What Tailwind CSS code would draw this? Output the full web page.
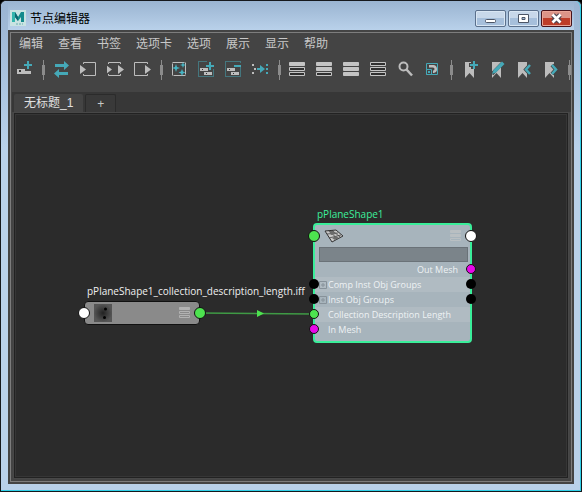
<!DOCTYPE html>
<html lang="zh-CN">
<head>
  <meta charset="UTF-8" />
  <meta name="viewport" content="width=device-width, initial-scale=1" />
  <title>节点编辑器</title>
  <script src="https://cdn.jsdelivr.net/npm/@tailwindcss/browser@4"></script>
</head>
<body class="h-screen bg-black font-['Liberation_Sans','Noto_Sans_CJK_SC',sans-serif] text-xs">

  <!-- Shared symbols -->
  <svg class="hidden">
    <symbol id="plus" viewBox="0 0 8 8"><path d="M3 0h2v3h3v2H5v3H3V5H0V3h3z" /></symbol>
    <symbol id="bookmark" viewBox="0 0 9 16"><path d="M0 0h9v16L4.500 11 0 16z" /></symbol>
    <symbol id="expand" viewBox="0 0 8 8"><path d="M.5.5h7v7h-7zM2 4h4M4 2v4" fill="none" stroke="#87929a" /></symbol>
  </svg>

  <div class="flex h-full flex-col rounded-t-md border border-[#15181c] bg-[#b9d1ea]">
    <div class="flex min-h-0 flex-1 flex-col rounded-t-md border-r border-b border-[#2fd0e8] bg-linear-to-b from-[#9ab4d2] to-[#b9d1ea] to-30% pr-1.5 pb-1.5 pl-[7px]">

      <!-- Title bar -->
      <header class="flex h-[29px] shrink-0 items-center bg-linear-to-b from-[#9ab4d1] to-[#b9d1ea] pt-1 pl-0.5">
        <svg class="size-4" viewBox="0 0 16 16">
          <rect width="16" height="16" fill="#c9e3e2" />
          <path d="M2 12V2h3l3 5 3-5h3v10h-3V7l-3 4-3-4v5z" fill="#148a8c" />
          <path d="M2 2h3v10H2z" fill="#33b5ad" />
          <path d="M5 2l3 5v4L5 7z" fill="#0c6770" />
          <path d="M6 14h7" stroke="#69aeb0" stroke-dasharray="2 1" />
        </svg>
        <h1 class="ml-1 flex-1 pt-0.5 text-black">节点编辑器</h1>
        <div class="mr-0.5 flex gap-0.5 pt-0.5">
          <button aria-label="最小化" class="h-[17px] w-[31px] rounded-xs border border-[#5b708c] bg-linear-to-b from-[#c8d8ea] from-50% to-[#a6bfdb] to-50% shadow-[inset_0_0_0_1px_#d9e6f3]">
            <svg class="mx-auto h-[15px] w-[15px]" viewBox="0 0 15 15"><rect x="2.500" y="8.500" width="10" height="3" rx="1" fill="#fff" stroke="#4c5566" /></svg>
          </button>
          <button aria-label="最大化" class="h-[17px] w-[31px] rounded-xs border border-[#5b708c] bg-linear-to-b from-[#c8d8ea] from-50% to-[#a6bfdb] to-50% shadow-[inset_0_0_0_1px_#d9e6f3]">
            <svg class="mx-auto h-[15px] w-[15px]" viewBox="0 0 15 15"><path d="M2.500 3.500h10v8h-10zM6 6.500h3v2H6z" fill="#fff" fill-rule="evenodd" stroke="#4c5566" /></svg>
          </button>
          <button aria-label="关闭" class="h-[17px] w-[31px] rounded-xs border border-[#47131b] bg-linear-to-b from-[#dc9488] from-50% to-[#bd3d29] to-50% shadow-[inset_0_0_0_1px_#e9a597]">
            <svg class="mx-auto h-[15px] w-[15px]" viewBox="0 0 15 15"><path d="M4 4l7 7M11 4l-7 7" stroke="#4c4552" stroke-width="5" /><path d="M3.500 3.500l8 8M11.500 3.500l-8 8" stroke="#fff" stroke-width="2.600" /></svg>
          </button>
        </div>
      </header>

      <div class="flex min-h-0 flex-1 flex-col bg-[#444] p-0.5">
        <main class="flex min-h-0 flex-1 flex-col overflow-hidden border border-[#7d7d7d]">

          <!-- Menus -->
          <nav class="flex h-[22px] shrink-0 items-center gap-[15px] pl-2 text-[#c8c8c8]">
            <button>编辑</button>
            <button>查看</button>
            <button>书签</button>
            <button>选项卡</button>
            <button>选项</button>
            <button>展示</button>
            <button>显示</button>
            <button>帮助</button>
          </nav>

          <!-- Toolbar -->
          <div class="flex h-[37px] shrink-0 overflow-hidden pb-2 *:flex *:shrink-0 *:items-center *:justify-center [&_svg]:h-[17px] [&_svg]:w-[17px] [&>button]:w-[27px] [&>span]:w-2.5">
            <button aria-label="创建节点"><svg viewBox="0 0 17 17"><path d="M1 8h8v2h6v3H1z" fill="#bdbdbd" /><path d="M3 9h2v2H3z" fill="#333" /><use href="#plus" x="8" y="0" width="8" height="8" fill="#45a9b8" /></svg></button>
            <span><i class="flex h-5 w-[3px] items-center bg-[linear-gradient(#8c8c8c,#8c8c8c)] bg-[length:1px_100%] bg-center bg-no-repeat"><b class="h-2.5 w-full bg-[#8c8c8c]"></b></i></span>
            <button aria-label="同步选择"><svg viewBox="0 0 17 17" fill="#45a9b8"><path d="M2 3h9V0l5 4.500L11 9V6H2zM15 11H6V8l-5 4.500L6 17v-3h9z" /></svg></button>
            <button aria-label="输入连接"><svg viewBox="0 0 17 17"><path d="M3.500 3V1.500h12v13h-12V13" fill="none" stroke="#bdbdbd" /><path d="M0 4l6 4.500L0 13z" fill="#bdbdbd" /></svg></button>
            <button aria-label="输入和输出连接"><svg viewBox="0 0 17 17"><path d="M1.500 3V1.500h12V3M1.500 13v1.500h12V13" fill="none" stroke="#bdbdbd" /><path d="M-1 4l6 4.500L-1 13zM11 4l6 4.500L11 13z" fill="#bdbdbd" /></svg></button>
            <button aria-label="输出连接"><svg viewBox="0 0 17 17"><path d="M13.500 3V1.500H.5v13h13V13" fill="none" stroke="#bdbdbd" /><path d="M11 4l6 4.500L11 13z" fill="#bdbdbd" /></svg></button>
            <span><i class="flex h-5 w-[3px] items-center bg-[linear-gradient(#8c8c8c,#8c8c8c)] bg-[length:1px_100%] bg-center bg-no-repeat"><b class="h-2.5 w-full bg-[#8c8c8c]"></b></i></span>
            <button aria-label="清除图表"><svg viewBox="0 0 17 17"><path d="M1.500 1.500h13v13h-13z" fill="none" stroke="#bdbdbd" stroke-dasharray="12 1" /><path d="M5 3l1 3 3 1-3 1-1 3-1-3-3-1 3-1zM12 1l.8 2.200L15 4l-2.200.8L12 7l-.8-2.200L9 4l2.200-.8zM11 8l1 2.500 2.500 1-2.500 1L11 15l-1-2.500-2.500-1 2.500-1z" fill="#45b5c4" /></svg></button>
            <button aria-label="添加到图表"><svg viewBox="0 0 17 17"><path d="M.5.5h15v15H.5z" fill="none" stroke="#45a9b8" stroke-dasharray="1 1" /><path d="M9 0h8v8H9z" fill="#444" /><path d="M2 7h8v3H2zM6 11h8v3H6z" fill="#bdbdbd" /><path d="M4 8h1v1H4zM8 12h1v1H8z" fill="#333" /><use href="#plus" x="8" y="1" width="8" height="8" fill="#45a9b8" /></svg></button>
            <button aria-label="从图表中移除"><svg viewBox="0 0 17 17"><path d="M.5.5h15v15H.5z" fill="none" stroke="#45a9b8" stroke-dasharray="1 1" /><path d="M9 2h8v4H9z" fill="#444" /><path d="M2 7h8v3H2zM6 11h8v3H6z" fill="#bdbdbd" /><path d="M4 8h1v1H4zM8 12h1v1H8z" fill="#333" /><path d="M9 4h7v2H9z" fill="#45a9b8" /></svg></button>
            <button aria-label="重新排布"><svg viewBox="0 0 17 17"><path d="M0 3h2v2H0zM2 7h2v2H2zM0 11h2v2H0z" fill="#bdbdbd" /><path d="M14 3h2v2h-2zM14 7h2v2h-2zM14 11h2v2h-2zM5 7h3V4l5 4-5 4V9H5z" fill="#45a9b8" /></svg></button>
            <span><i class="flex h-5 w-[3px] items-center bg-[linear-gradient(#8c8c8c,#8c8c8c)] bg-[length:1px_100%] bg-center bg-no-repeat"><b class="h-2.5 w-full bg-[#8c8c8c]"></b></i></span>
            <button aria-label="简单模式"><svg viewBox="0 0 17 17" fill="#303030" stroke="#c4c4c4"><path d="M.5 1.500h15v3H.5z" fill="#c4c4c4" /><path d="M.5 6.500h15v3H.5zM.5 11.500h15v3H.5z" /></svg></button>
            <button aria-label="已连接模式"><svg viewBox="0 0 17 17" fill="#303030" stroke="#c4c4c4"><path d="M.5 1.500h15v3H.5zM.5 6.500h15v3H.5z" fill="#c4c4c4" /><path d="M.5 11.500h15v3H.5z" /></svg></button>
            <button aria-label="完全模式"><svg viewBox="0 0 17 17" fill="#c4c4c4" stroke="#c4c4c4"><path d="M.5 1.500h15v3H.5zM.5 6.500h15v3H.5zM.5 11.500h15v3H.5z" /></svg></button>
            <button aria-label="自定义模式"><svg viewBox="0 0 17 17" fill="#303030" stroke="#c4c4c4"><path d="M.5 1.500h15v3H.5zM.5 6.500h15v3H.5zM.5 11.500h15v3H.5z" /></svg></button>
            <button aria-label="搜索"><svg viewBox="0 0 17 17" fill="none" stroke="#bdbdbd" stroke-width="2"><circle cx="6.500" cy="5.500" r="4" /><path d="M9.500 8.500l5.500 6" stroke-width="2.500" /></svg></button>
            <button aria-label="样例"><svg viewBox="0 0 17 17"><path d="M2.500 2.500h11v11h-11z" fill="none" stroke="#45a9b8" /><path d="M5 4h3.500a4 4 0 0 1 1 8H9V9.500a1.500 1.500 0 0 0 0-3H5z" fill="#bdbdbd" /><path d="M2.500 8.500h5v5h-5z" fill="#444" stroke="#45a9b8" /><path d="M4 10h2v2H4z" fill="#45a9b8" /></svg></button>
            <span><i class="flex h-5 w-[3px] items-center bg-[linear-gradient(#8c8c8c,#8c8c8c)] bg-[length:1px_100%] bg-center bg-no-repeat"><b class="h-2.5 w-full bg-[#8c8c8c]"></b></i></span>
            <button aria-label="创建书签"><svg viewBox="0 0 17 17"><use href="#bookmark" x="4" y="1" width="9" height="16" fill="#bdbdbd" /><path d="M10 0h4v2h3v6h-7V6H8V2h2z" fill="#444" /><use href="#plus" x="9" y="0" width="8" height="8" fill="#45a9b8" /></svg></button>
            <button aria-label="编辑书签"><svg viewBox="0 0 17 17"><use href="#bookmark" x="4" y="1" width="9" height="16" fill="#bdbdbd" /><path d="M4 13L15.500 1" stroke="#444" stroke-width="3.500" /><path d="M4 13l1.500-4L14 .5 16.500 3 8 11.500z" fill="#45a9b8" /></svg></button>
            <button aria-label="上一个书签"><svg viewBox="0 0 17 17"><use href="#bookmark" x="3" y="1" width="9" height="16" fill="#bdbdbd" /><path d="M15 4l-4 4.500 4 4.500" fill="none" stroke="#444" stroke-width="4" /><path d="M15 4l-4 4.500 4 4.500" fill="none" stroke="#45a9b8" stroke-width="2.500" /></svg></button>
            <button aria-label="下一个书签"><svg viewBox="0 0 17 17"><use href="#bookmark" x="3" y="1" width="9" height="16" fill="#bdbdbd" /><path d="M10 4l4 4.500-4 4.500" fill="none" stroke="#444" stroke-width="4" /><path d="M10 4l4 4.500-4 4.500" fill="none" stroke="#45a9b8" stroke-width="2.500" /></svg></button>
            <span><i class="flex h-5 w-[3px] items-center bg-[linear-gradient(#8c8c8c,#8c8c8c)] bg-[length:1px_100%] bg-center bg-no-repeat"><b class="h-2.5 w-full bg-[#8c8c8c]"></b></i></span>
          </div>

          <!-- Tabs -->
          <div role="tablist" class="ml-px flex h-5 shrink-0 items-end gap-0.5 bg-[#373737] pl-0.5">
            <button role="tab" aria-selected="true" class="h-[18px] rounded-t-xs bg-[#444] px-2.5 leading-[18px] text-[#e0e0e0]">无标题_1</button>
            <button aria-label="新建选项卡" class="h-[18px] w-[31px] rounded-t-xs border border-b-0 border-[#2b2b2b] bg-[#393939] leading-4 text-[#c8c8c8]">+</button>
          </div>

          <!-- Graph -->
          <div class="mr-0.5 mb-0.5 ml-0.5 flex flex-1 border border-[#484848]">
            <div class="flex flex-1 border border-[#222]">
              <div class="relative flex-1 overflow-hidden border border-[#363636] bg-[#2b2b2b] font-['Open_Sans',sans-serif] text-[10px] leading-[15px]">

                <svg class="absolute top-0 left-0 h-full w-full">
                  <path d="M183 198l115 1" stroke="#3f9a45" stroke-width="1.500" />
                  <path d="M241 195l7 3.500-7 3.500z" fill="#4de34f" />
                </svg>

                <!-- File node -->
                <div class="absolute top-[169px] left-[71px] whitespace-nowrap text-[#f0f0f0]">pPlaneShape1_collection_description_length.iff</div>
                <div class="absolute top-[186px] left-[68px] flex h-6 w-[116px] items-center justify-between rounded-[4px] border border-[#111] bg-[#8a8a8a] px-[9px]">
                  <svg class="h-[18px] w-[18px]" viewBox="0 0 18 18">
                    <defs><radialGradient id="shade"><stop offset="0" stop-color="#222" /><stop offset="1" stop-color="#555" /></radialGradient></defs>
                    <rect width="18" height="18" fill="url(#shade)" /><circle cx="11.500" cy="5" r="1.500" /><circle cx="10.500" cy="13.500" r="1.500" />
                  </svg>
                  <svg class="h-3 w-[11px]" viewBox="0 0 11 12" fill="none" stroke="#b2b2b2"><path d="M.5.5h10v2H.5z" fill="#b2b2b2" /><path d="M.5 4.500h10v2H.5zM.5 8.500h10v2H.5z" /></svg>
                  <i class="absolute top-[5px] -left-[7px] size-3 rounded-full border border-[#111] bg-white"></i>
                  <i class="absolute top-[5px] -right-[7px] size-3 rounded-full border border-[#111] bg-[#4de34f]"></i>
                </div>

                <!-- Mesh node -->
                <div class="absolute top-[92px] left-[301px] whitespace-nowrap text-[#3df09c]">pPlaneShape1</div>
                <div class="absolute top-[108px] left-[297px] h-[120px] w-[159px] rounded-[4px] border-2 border-[#3aee9a] bg-[#a7b4bc] text-[#eef2f4]">
                  <div class="flex h-[22px] items-center justify-between px-[9px]">
                    <svg class="h-[14px] w-5" viewBox="0 0 20 14"><path d="M1 2l11-1 7 6L8 13z" fill="#c9c9c9" stroke="#333" /><path d="M4.500 1.700L14 10M8 1.300l8.500 7M3 5l11-1M5 9l12-3" stroke="#333" stroke-width=".7" /><path d="M5 2h4l3 3-5 1zM8 9l4-2 3 2-4 2z" fill="#6b6b6b" /></svg>
                    <svg class="h-3 w-[11px]" viewBox="0 0 11 12" fill="none" stroke="#b9bfc2"><path d="M.5.5h10v2H.5zM.5 4.500h10v2H.5z" fill="#b9bfc2" /><path d="M.5 8.500h10v2H.5z" /></svg>
                  </div>
                  <input aria-label="过滤属性" class="mx-1 block h-[15px] w-[149px] border border-[#6a7278] bg-[#7b848a] px-1 outline-none" />
                  <ul class="text-[9px]">
                    <li class="h-[15px] pr-3 text-right">Out Mesh</li>
                    <li class="flex h-[15px] items-center bg-[#b0bbc2] pl-1"><svg class="mr-px size-2"><use href="#expand" /></svg>Comp Inst Obj Groups</li>
                    <li class="flex h-[15px] items-center pl-1"><svg class="mr-px size-2"><use href="#expand" /></svg>Inst Obj Groups</li>
                    <li class="h-[15px] bg-[#b0bbc2] pl-[13px]">Collection Description Length</li>
                    <li class="h-[15px] pl-[13px]">In Mesh</li>
                  </ul>
                  <i class="absolute top-[5px] -left-[7px] size-3 rounded-full border border-[#111] bg-[#4de34f]"></i>
                  <i class="absolute top-[5px] -right-[7px] size-3 rounded-full border border-[#111] bg-white"></i>
                  <i class="absolute top-[39px] -right-[6px] size-2.5 rounded-full border border-[#111] bg-[#e808e8]"></i>
                  <i class="absolute top-[54px] -left-[6px] size-2.5 rounded-full bg-black"></i>
                  <i class="absolute top-[54px] -right-[6px] size-2.5 rounded-full bg-black"></i>
                  <i class="absolute top-[69px] -left-[6px] size-2.5 rounded-full bg-black"></i>
                  <i class="absolute top-[69px] -right-[6px] size-2.5 rounded-full bg-black"></i>
                  <i class="absolute top-[84px] -left-[6px] size-2.5 rounded-full border border-[#111] bg-[#4de34f]"></i>
                  <i class="absolute top-[99px] -left-[6px] size-2.5 rounded-full border border-[#111] bg-[#e808e8]"></i>
                </div>

              </div>
            </div>
          </div>

        </main>
      </div>
    </div>
  </div>

</body>
</html>
